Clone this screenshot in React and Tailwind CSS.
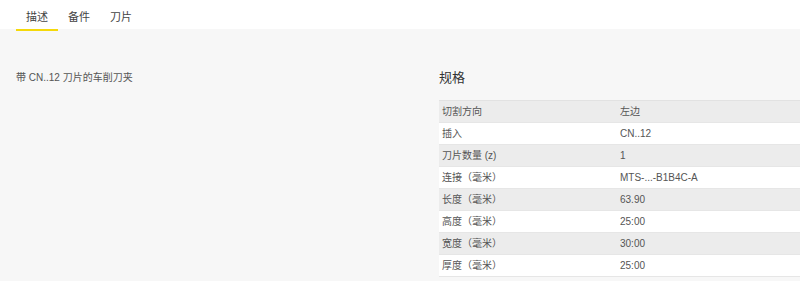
import React, { useState } from 'react';

const tabs = ['描述', '备件', '刀片'];

const specs = [
    ['切割方向', '左边'],
    ['插入', 'CN..12'],
    ['刀片数量 (z)', '1'],
    ['连接（毫米）', 'MTS-...-B1B4C-A'],
    ['长度（毫米）', '63.90'],
    ['高度（毫米）', '25:00'],
    ['宽度（毫米）', '30:00'],
    ['厚度（毫米）', '25:00'],
];

const App = () => {
    const [active, setActive] = useState(0);

    return (
        <div className="w-[800px] h-[281px] overflow-hidden bg-[#f7f7f7] text-[#555] font-['Liberation_Sans','Noto_Sans_CJK_SC',sans-serif]">
            {/* tab bar */}
            <div className="h-[29px] bg-white flex px-4 relative z-10">
                {tabs.map((tab, index) => (
                    <button
                        key={tab}
                        onClick={() => setActive(index)}
                        className={`h-[31px] px-[10px] pt-[10px] pb-[5px] text-[11px] leading-[14px] text-[#444] border-b-2 ${active === index ? 'border-[#f5d90a]' : 'border-transparent'}`}
                    >
                        {tab}
                    </button>
                ))}
            </div>

            {/* content */}
            <div className="flex gap-4 px-4 pt-[40px]">
                <div className="w-[407px] shrink-0">
                    <p className="text-[10px] leading-[18px]">带 CN..12 刀片的车削刀夹</p>
                </div>
                <div className="w-[407px] shrink-0">
                    <h2 className="text-[13px] leading-[18px] text-[#333]">规格</h2>
                    <div className="mt-[13px] border-t border-[#e2e2e2]">
                        {specs.map(([label, value], index) => (
                            <div
                                key={label}
                                className={`flex h-[22px] items-center border-b border-[#e6e6e6] text-[10px] ${index % 2 === 0 ? 'bg-[#ececec]' : 'bg-white'}`}
                            >
                                <div className="w-[181px] pl-[3px]">{label}</div>
                                <div>{value}</div>
                            </div>
                        ))}
                    </div>
                </div>
            </div>
        </div>
    );
};

export default App;
